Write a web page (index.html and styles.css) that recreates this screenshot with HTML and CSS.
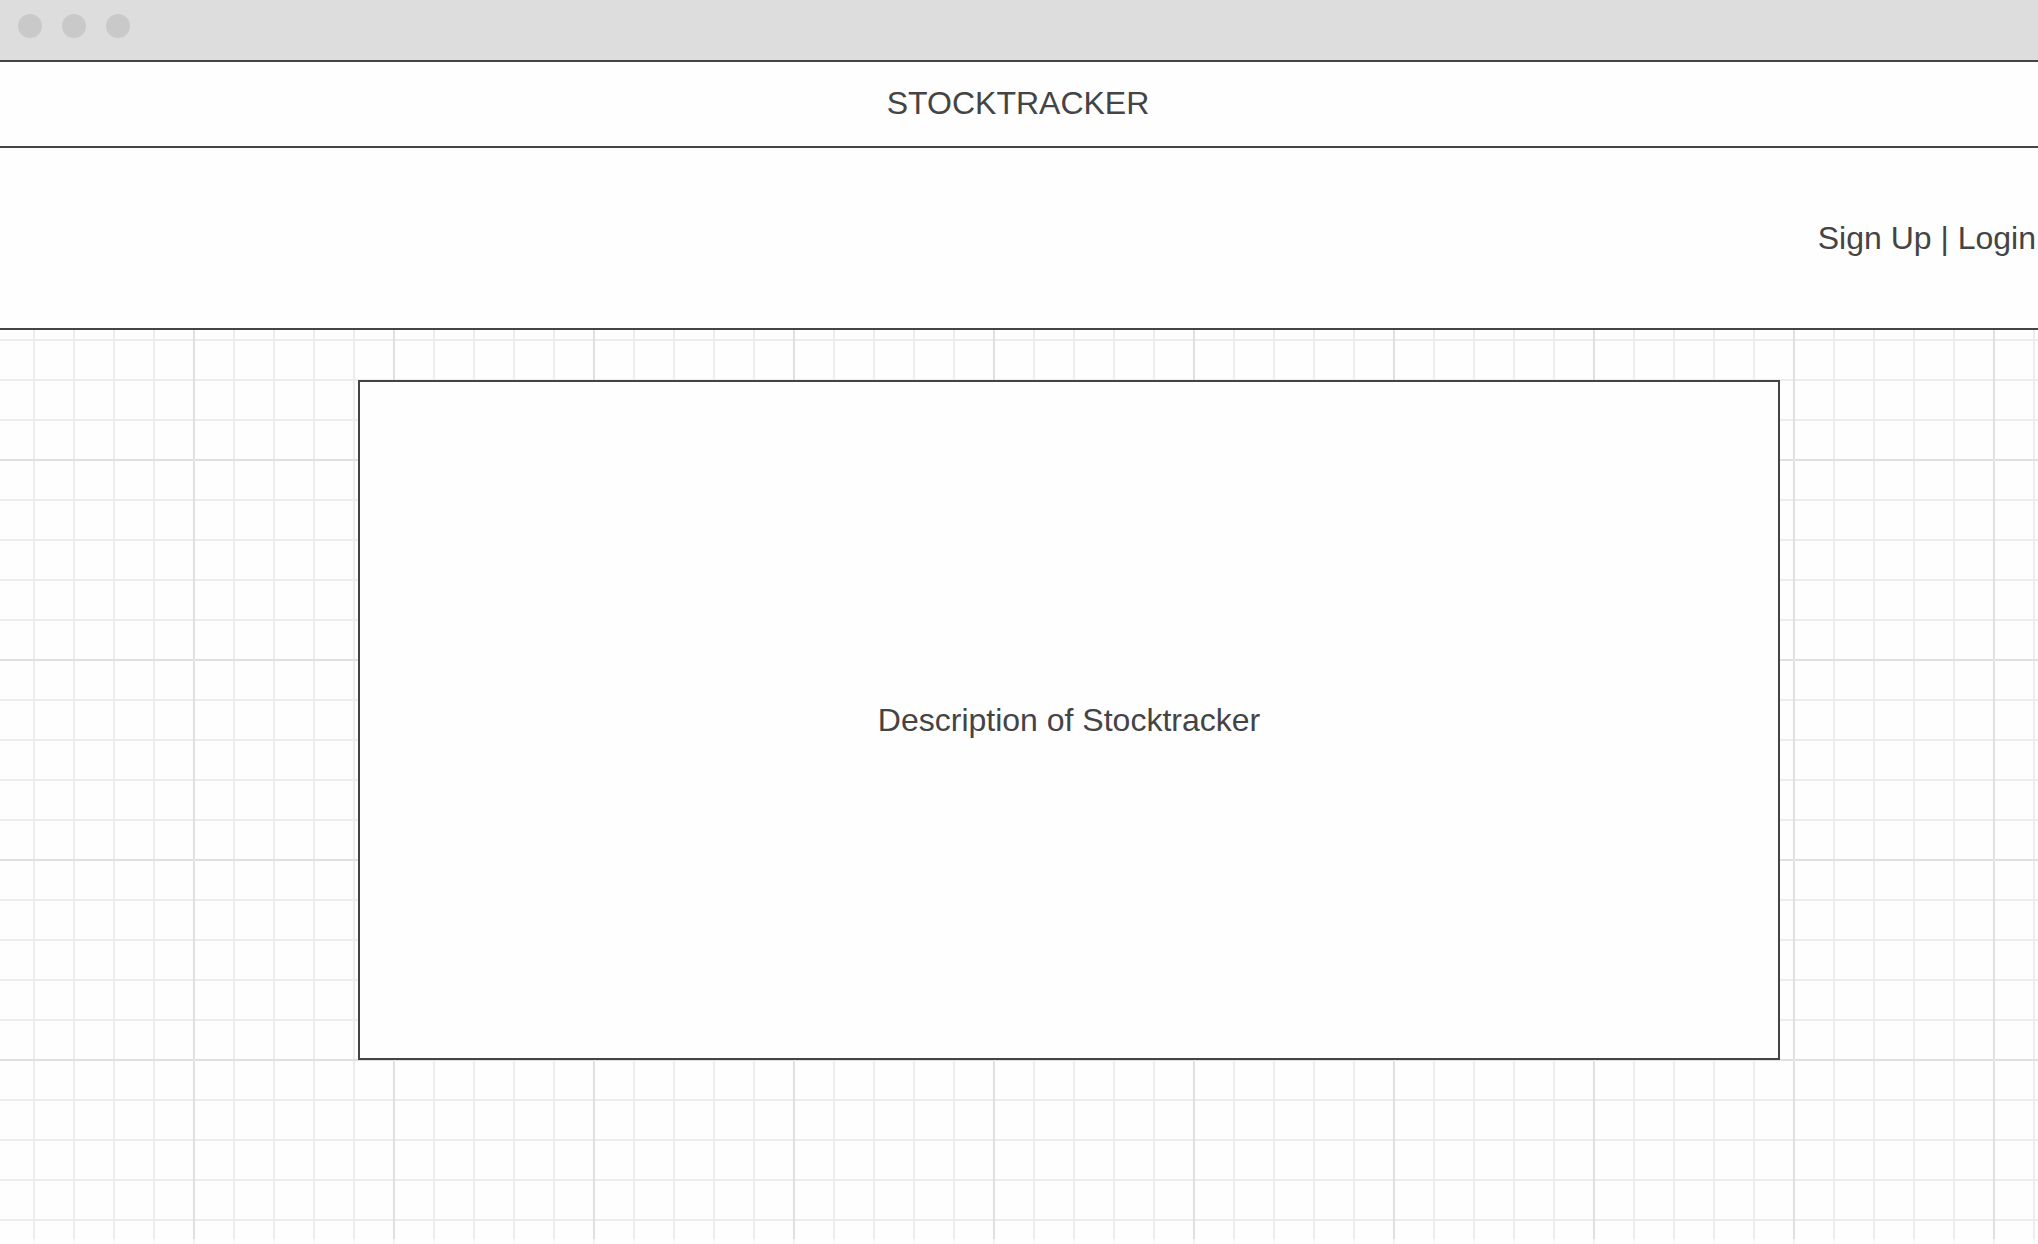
FILE: index.html
```html
<!DOCTYPE html>
<html lang="en">
<head>
<meta charset="utf-8">
<title>Stocktracker</title>
<meta name="viewport" content="width=device-width, initial-scale=1">
<link rel="stylesheet" href="styles.css">
</head>
<body>
<div class="window-bar">
  <span class="dot"></span>
  <span class="dot"></span>
  <span class="dot"></span>
</div>
<header class="title-bar">
  <h1 class="title">STOCKTRACKER</h1>
</header>
<nav class="account-bar">
  <a class="link" href="#signup">Sign Up</a>&nbsp;|&nbsp;<a class="link" href="#login">Login</a>
</nav>
<main class="canvas">
  <section class="panel">
    <p class="description">Description of Stocktracker</p>
  </section>
</main>
</body>
</html>
```

FILE: styles.css
```css
* {
  box-sizing: border-box;
}

body {
  display: flex;
  flex-direction: column;
  min-height: 100vh;
  margin: 0;
  background: #fefefe;
  color: #444;
  font: 32px/40px "Liberation Sans", Arial, sans-serif;
}

.window-bar {
  display: flex;
  gap: 20px;
  padding: 14px 18px 22px;
  background: #ddd;
  border-bottom: 2px solid #444;
}

.dot {
  width: 24px;
  height: 24px;
  border-radius: 50%;
  background: #c9c9c9;
}

.title-bar {
  padding: 21px 2px 23px 0;
  background: #fefefe;
  border-bottom: 2px solid #444;
  text-align: center;
}

.title,
.description {
  margin: 0;
  font-size: 32px;
  font-weight: 400;
}

.account-bar {
  padding: 70px 2px;
  background: #fefefe;
  border-bottom: 2px solid #444;
  text-align: right;
}

.link {
  color: inherit;
  text-decoration: none;
}

/* Page edge fade, white major crossings, major lines, minor lines */
.canvas {
  flex: 1;
  display: flex;
  align-items: flex-start;
  padding: 50px 258px 50px 358px;
  background-color: #fefefe;
  background-image:
    linear-gradient(rgba(255, 255, 255, 0.6), rgba(255, 255, 255, 0.6)),
    conic-gradient(from 270deg at 1px 1px, #fff 90deg, transparent 90deg),
    linear-gradient(to right, #e0e0e0 2px, transparent 2px),
    linear-gradient(#e0e0e0 2px, transparent 2px),
    linear-gradient(to right, #ededed 2px, transparent 2px),
    linear-gradient(#ededed 2px, transparent 2px);
  background-size: 100% 5px, 200px 200px, 200px 200px, 200px 200px, 40px 40px, 40px 40px;
  background-position: 0 100%, 194px 130px, 193px 129px, 193px 129px, 33px 9px, 33px 9px;
  background-repeat: no-repeat, repeat, repeat, repeat, repeat, repeat;
}

.panel {
  flex: 1;
  display: flex;
  align-items: center;
  justify-content: center;
  min-height: 680px;
  background: #fefefe;
  border: 2px solid #444;
}
```
